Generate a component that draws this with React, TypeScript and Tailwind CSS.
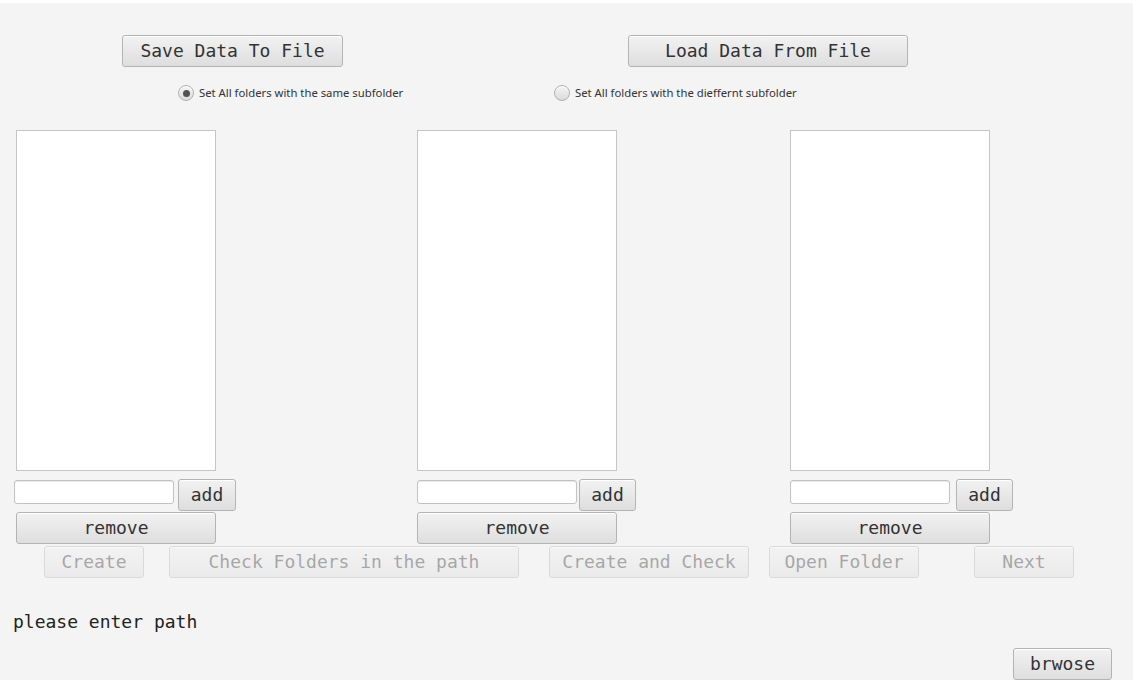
import React from "react";

const mono = { fontFamily: '"DejaVu Sans Mono", "Liberation Mono", monospace' };

function Btn({
  label,
  w,
  h = 32,
  disabled = false,
  className = "",
}: {
  label: string;
  w: number;
  h?: number;
  disabled?: boolean;
  className?: string;
}) {
  return (
    <div
      className={
        "flex items-center justify-center rounded-[3px] border border-[#b4b4b4] bg-gradient-to-b from-[#f2f2f2] to-[#dedede] text-[18px] text-[#333333] shadow-[inset_0_1px_0_#ffffff] shrink-0 " +
        (disabled ? "opacity-40 " : "") +
        className
      }
      style={{ width: w, height: h, ...mono }}
    >
      <span className="leading-none">{label}</span>
    </div>
  );
}

function Radio({ checked, label }: { checked: boolean; label: string }) {
  return (
    <div className="flex items-center gap-[5px] whitespace-nowrap">
      <div className="flex h-[16px] w-[16px] shrink-0 items-center justify-center rounded-full border border-[#b0b0b0] bg-gradient-to-b from-[#f4f4f4] to-[#dcdcdc] shadow-[inset_0_1px_0_#ffffff]">
        {checked && <div className="h-[7px] w-[7px] rounded-full bg-[#515151]" />}
      </div>
      <span
        className="text-[11.3px] text-[#333333] leading-none whitespace-nowrap"
        style={{ fontFamily: '"Noto Sans", "Open Sans", sans-serif' }}
      >
        {label}
      </span>
    </div>
  );
}

function Column({
  listMl,
  addGap,
  addW,
  removeMl,
}: {
  listMl: number;
  addGap: number;
  addW: number;
  removeMl: number;
}) {
  return (
    <div className="flex flex-col shrink-0">
      <div
        className="h-[341px] w-[200px] border border-[#c6c6c6] bg-white"
        style={{ marginLeft: listMl }}
      />
      <div className="mt-[8px] flex items-start" style={{ gap: addGap }}>
        <div className="mt-[1px] h-[24px] w-[160px] rounded-[3px] border border-[#c2c2c2] bg-white shadow-[inset_0_1px_1px_#e8e8e8]" />
        <Btn label="add" w={addW} />
      </div>
      <div className="mt-[1px]" style={{ marginLeft: removeMl }}>
        <Btn label="remove" w={200} />
      </div>
    </div>
  );
}

export default function App() {
  return (
    <div className="h-[680px] w-[1133px] overflow-hidden border-t-[3px] border-white bg-[#f4f4f4]">
      {/* top buttons */}
      <div className="mt-[32px] flex pl-[122px]" style={{ gap: 285 }}>
        <Btn label="Save Data To File" w={221} />
        <Btn label="Load Data From File" w={280} />
      </div>

      {/* radios */}
      <div className="mt-[18px] flex h-[16px] pl-[178px]" style={{ gap: 151 }}>
        <div className="w-[225px] shrink-0">
          <Radio checked label="Set All folders with the same subfolder" />
        </div>
        <Radio checked={false} label="Set All folders with the dieffernt subfolder" />
      </div>

      {/* lists */}
      <div className="mt-[29px] flex pl-[14px]">
        <Column listMl={2} addGap={4} addW={58} removeMl={2} />
        <div className="w-[181px] shrink-0" />
        <Column listMl={0} addGap={2} addW={57} removeMl={0} />
        <div className="w-[154px] shrink-0" />
        <Column listMl={0} addGap={6} addW={57} removeMl={0} />
      </div>

      {/* action buttons */}
      <div className="mt-[2px] flex pl-[44px]">
        <Btn label="Create" w={100} disabled />
        <Btn label="Check Folders in the path" w={350} disabled className="ml-[25px]" />
        <Btn label="Create and Check" w={200} disabled className="ml-[30px]" />
        <Btn label="Open Folder" w={150} disabled className="ml-[20px]" />
        <Btn label="Next" w={100} disabled className="ml-[55px]" />
      </div>

      <div
        className="mt-[33px] pl-[13px] text-[18px] leading-[21px] text-[#222222]"
        style={mono}
      >
        please enter path
      </div>

      <div className="mt-[16px] flex pl-[1013px]">
        <Btn label="brwose" w={99} />
      </div>
    </div>
  );
}
